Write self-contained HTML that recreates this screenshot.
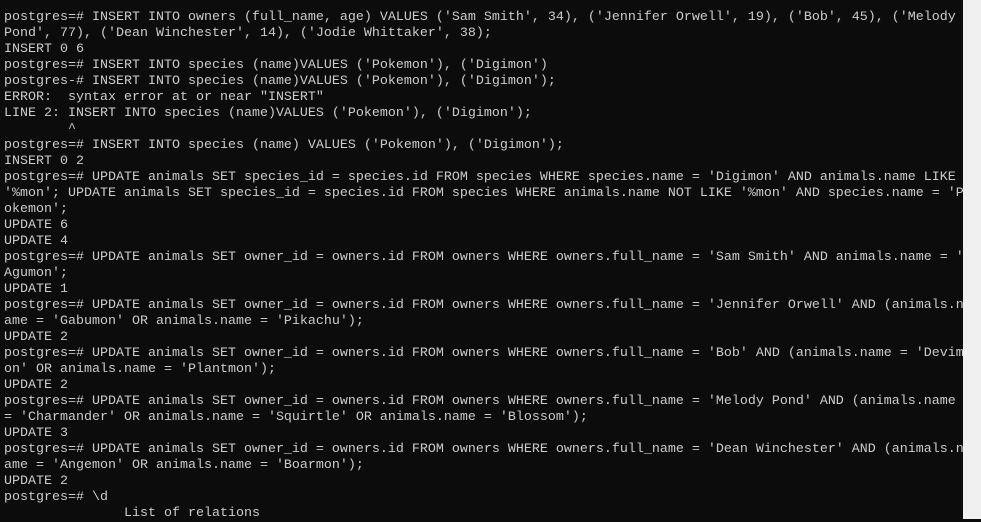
<!DOCTYPE html>
<html><head><meta charset="utf-8"><style>
html,body{margin:0;padding:0;width:981px;height:519px;overflow:hidden;background:#0c0c0c;}
pre{margin:0;position:absolute;left:4px;top:10px;font-family:"Liberation Mono",monospace;font-size:13.33px;line-height:16px;color:#cccccc;white-space:pre;}
.sb{position:absolute;left:963px;top:0;width:18px;height:519px;background:#f0f0f0;}
</style></head><body>
<pre>postgres=# INSERT INTO owners (full_name, age) VALUES ('Sam Smith', 34), ('Jennifer Orwell', 19), ('Bob', 45), ('Melody
Pond', 77), ('Dean Winchester', 14), ('Jodie Whittaker', 38);
INSERT 0 6
postgres=# INSERT INTO species (name)VALUES ('Pokemon'), ('Digimon')
postgres-# INSERT INTO species (name)VALUES ('Pokemon'), ('Digimon');
ERROR:  syntax error at or near "INSERT"
LINE 2: INSERT INTO species (name)VALUES ('Pokemon'), ('Digimon');
        ^
postgres=# INSERT INTO species (name) VALUES ('Pokemon'), ('Digimon');
INSERT 0 2
postgres=# UPDATE animals SET species_id = species.id FROM species WHERE species.name = 'Digimon' AND animals.name LIKE
'%mon'; UPDATE animals SET species_id = species.id FROM species WHERE animals.name NOT LIKE '%mon' AND species.name = 'P
okemon';
UPDATE 6
UPDATE 4
postgres=# UPDATE animals SET owner_id = owners.id FROM owners WHERE owners.full_name = 'Sam Smith' AND animals.name = '
Agumon';
UPDATE 1
postgres=# UPDATE animals SET owner_id = owners.id FROM owners WHERE owners.full_name = 'Jennifer Orwell' AND (animals.n
ame = 'Gabumon' OR animals.name = 'Pikachu');
UPDATE 2
postgres=# UPDATE animals SET owner_id = owners.id FROM owners WHERE owners.full_name = 'Bob' AND (animals.name = 'Devim
on' OR animals.name = 'Plantmon');
UPDATE 2
postgres=# UPDATE animals SET owner_id = owners.id FROM owners WHERE owners.full_name = 'Melody Pond' AND (animals.name
= 'Charmander' OR animals.name = 'Squirtle' OR animals.name = 'Blossom');
UPDATE 3
postgres=# UPDATE animals SET owner_id = owners.id FROM owners WHERE owners.full_name = 'Dean Winchester' AND (animals.n
ame = 'Angemon' OR animals.name = 'Boarmon');
UPDATE 2
postgres=# \d
               List of relations</pre>
<div class="sb"></div>
</body></html>
